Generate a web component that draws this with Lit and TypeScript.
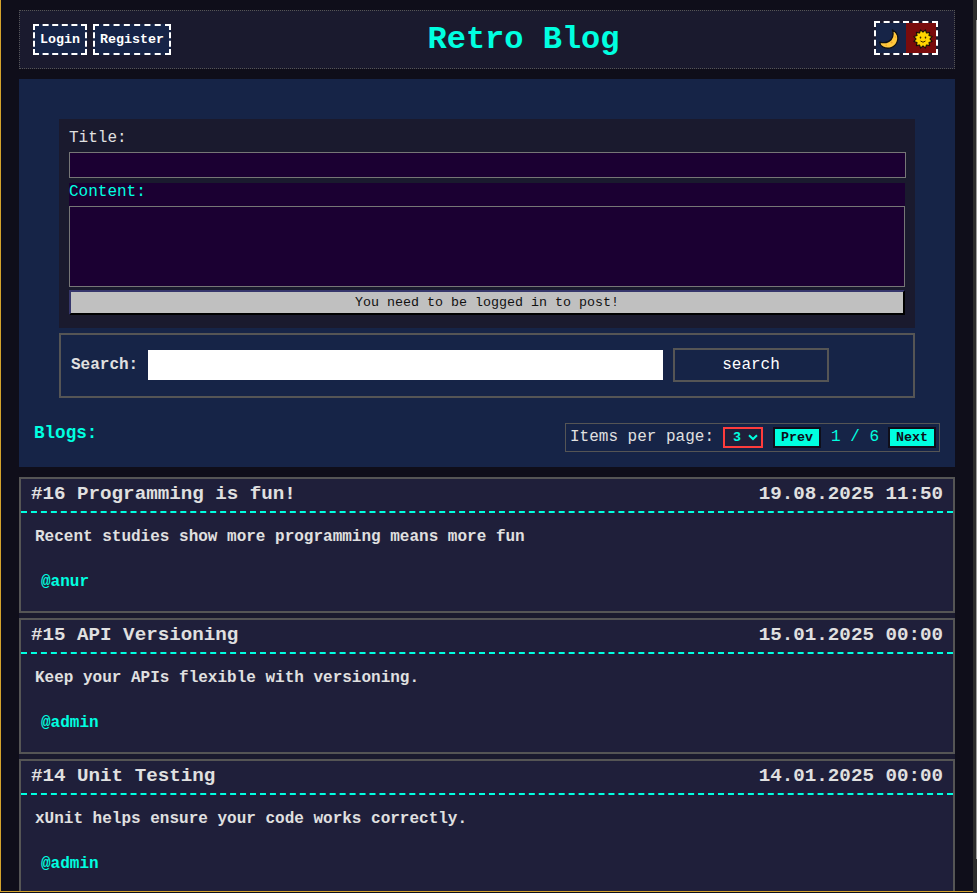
import { LitElement, html, css, svg } from "lit";
import { customElement, property } from "lit/decorators.js";

const sunPoints = Array.from({ length: 24 }, (_, i) => {
  const r = i % 2 === 0 ? 9.4 : 6.9;
  const a = ((i + 1) * Math.PI) / 12;
  return `${(10 + r * Math.sin(a)).toFixed(2)},${(10 - r * Math.cos(a)).toFixed(2)}`;
}).join(" ");

const moon = svg`<svg width="20" height="20" viewBox="0 0 20 20">
  <path d="M13.4 .9C17.8 3.3 19.8 7.8 18.3 12.4C16.3 18.5 9.5 20.9 3.7 17.9C2 16.9 .9 15.4 .7 13.1C5.4 14.3 9.4 13.7 12 10.8C14.3 8.2 14.5 4.6 13.4 .9Z" fill="#ffc83d" stroke="#111" stroke-width="1.3" stroke-linejoin="round"/>
  <circle cx="16.5" cy="8" r=".8" fill="#f0a329"/><circle cx="12.6" cy="13.6" r="1" fill="#f0a329"/><circle cx="7.2" cy="16.2" r=".8" fill="#f0a329"/>
</svg>`;

const sun = svg`<svg width="20" height="20" viewBox="0 0 20 20">
  <polygon points="${sunPoints}" fill="#ffd500" stroke="#15100a" stroke-width="1.1" stroke-linejoin="round"/>
  <ellipse cx="7.5" cy="8.6" rx=".8" ry="1.1" fill="#3a2600"/><ellipse cx="12.5" cy="8.6" rx=".8" ry="1.1" fill="#3a2600"/>
  <path d="M7.8 12.3Q10 14.4 12.2 12.3" fill="none" stroke="#3a2600" stroke-width="1" stroke-linecap="round"/>
</svg>`;

@customElement("blog-card")
export class BlogCard extends LitElement {
  @property() heading = "";
  @property() date = "";
  @property() text = "";
  @property() author = "";

  static styles = css`
    :host { display: block; box-sizing: border-box; height: 136px; border: 2px solid #555; background: #1f1f3a; color: #e0e0e0; font-weight: bold; }
    .head { display: flex; justify-content: space-between; box-sizing: border-box; height: 34px; padding: 4px 10px 0 10px; font-size: 19.2px; line-height: 23px; border-bottom: 2px dashed #00ffe0; }
    .text { padding: 15px 14px 0; font-size: 16px; line-height: 18px; }
    .author { padding: 27px 20px 0; font-size: 16px; line-height: 18px; color: #00ffe0; }
  `;

  render() {
    return html`
      <div class="head"><span>${this.heading}</span><span>${this.date}</span></div>
      <div class="text">${this.text}</div>
      <div class="author">@${this.author}</div>
    `;
  }
}

@customElement("app-root")
export class AppRoot extends LitElement {
  posts = [
    { heading: "#16 Programming is fun!", date: "19.08.2025 11:50", text: "Recent studies show more programming means more fun", author: "anur" },
    { heading: "#15 API Versioning", date: "15.01.2025 00:00", text: "Keep your APIs flexible with versioning.", author: "admin" },
    { heading: "#14 Unit Testing", date: "14.01.2025 00:00", text: "xUnit helps ensure your code works correctly.", author: "admin" },
  ];

  static styles = css`
    :host { display: flex; box-sizing: border-box; height: 893px; overflow: hidden; background: #0f0e1a; color: #e0e0e0; font: 16px/18px "Liberation Mono", monospace; }
    * { box-sizing: border-box; }
    button, input, textarea { font-family: inherit; margin: 0; border-radius: 0; outline: none; }
    .frame { flex: 1; height: 892px; overflow: hidden; border-left: 1px solid #d4a32c; border-bottom: 1px solid #d4a32c; padding: 10px 18px 0; }
    .scroll { width: 4px; height: 893px; background: linear-gradient(to right, #2c2c2c 0 3px, #9b9b9b 3px); }
    .scroll::before { content: ""; display: block; height: 20px; background: #2c2c2c; }
    .scroll::after { content: ""; display: block; margin-top: 839px; height: 34px; background: #2c2c2c; }
    header { display: flex; justify-content: space-between; height: 59px; padding: 0 16px 0 13px; border: 1px dotted #555; background: #1a1a2e; }
    .auth { display: flex; gap: 6px; padding-top: 13px; }
    .auth button { height: 31px; padding: 0 5px; border: 2px dashed #fff; background: #162447; color: #fff; font-size: 13.333px; font-weight: bold; }
    h1 { margin: 10px 0 0; padding-left: 2px; font-size: 32px; line-height: 38px; color: #00ffe0; }
    .theme { display: flex; width: 64px; height: 34px; margin-top: 10px; border: 2px dashed #fff; }
    .theme span { width: 30px; height: 30px; background: #162447; padding: 6px 0 0 3px; }
    .theme .sun { background: #7a0c0c; padding: 6px 0 0 7px; }
    .theme svg { display: block; }
    .main { height: 388px; margin-top: 10px; padding: 40px 40px 0; background: #162447; }
    .form { display: flex; flex-direction: column; height: 209px; padding: 10px 10px 0; background: #1a1a2e; }
    .form input { width: 837px; height: 26px; margin-top: 5px; border: 1px solid #767676; background: #1b0032; }
    .content { height: 104px; margin-top: 5px; background: #1b0032; color: #00ffe0; }
    .content textarea { display: block; width: 100%; height: 81px; margin-top: 5px; border: 1px solid #767676; background: #1b0032; resize: none; }
    .content label { display: block; height: 18px; }
    .post { height: 25px; margin-top: 3px; padding: 0; border: 2px solid #000; border-top-color: #36366c; border-left-color: #36366c; background: #c0c0c0; color: #111; font-size: 13.333px; }
    .search { display: flex; align-items: flex-start; height: 65px; margin-top: 5px; padding: 13px 10px 0; border: 2px solid #555; }
    .search label { width: 77px; padding-top: 8px; font-weight: bold; }
    .search input { width: 515px; height: 30px; margin-top: 2px; border: 0; background: #fff; }
    .search button { width: 156px; height: 34px; margin-left: 10px; border: 2px solid #555; background: #162447; color: #fff; font-size: 16px; }
    .bar { display: flex; justify-content: space-between; margin: 25px -25px 0; }
    h3 { margin: 0; font-size: 17.6px; line-height: 21px; color: #00ffe0; }
    .pager { display: flex; width: 375px; height: 29px; padding: 3px 3px 0 4px; border: 1px solid #555; line-height: 20px; }
    .select { display: flex; align-items: center; gap: 7px; width: 40px; height: 21px; margin: 0 10px 0 9px; padding-left: 8px; border: 2px solid #ff3c3c; background: #1f1f3a; color: #00ffe0; font-size: 13.333px; font-weight: bold; }
    .pager button { height: 21px; padding: 0 6px; border: 2px solid #0f0e1a; background: #00ffe0; color: #0f0e1a; font-size: 13.333px; font-weight: bold; }
    .count { width: 67px; padding-left: 1px; text-align: center; color: #00ffe0; }
    .list { display: flex; flex-direction: column; gap: 5px; margin-top: 10px; background: #1a1a2e; }
  `;

  render() {
    return html`
      <div class="frame">
        <header>
          <div class="auth"><button>Login</button><button>Register</button></div>
          <h1>Retro Blog</h1>
          <div class="theme"><span>${moon}</span><span class="sun">${sun}</span></div>
        </header>
        <section class="main">
          <div class="form">
            <label>Title:</label>
            <input />
            <div class="content"><label>Content:</label><textarea></textarea></div>
            <button class="post">You need to be logged in to post!</button>
          </div>
          <div class="search"><label>Search:</label><input /><button>search</button></div>
          <div class="bar">
            <h3>Blogs:</h3>
            <div class="pager">
              <span>Items per page:</span>
              <div class="select">3<svg width="10" height="7" viewBox="0 0 10 7"><path d="M1 1.2L5 5L9 1.2" fill="none" stroke="#00ffe0" stroke-width="2"/></svg></div>
              <button>Prev</button><span class="count">1 / 6</span><button>Next</button>
            </div>
          </div>
        </section>
        <section class="list">
          ${this.posts.map((p) => html`<blog-card .heading=${p.heading} .date=${p.date} .text=${p.text} .author=${p.author}></blog-card>`)}
        </section>
      </div>
      <div class="scroll"></div>
    `;
  }
}
